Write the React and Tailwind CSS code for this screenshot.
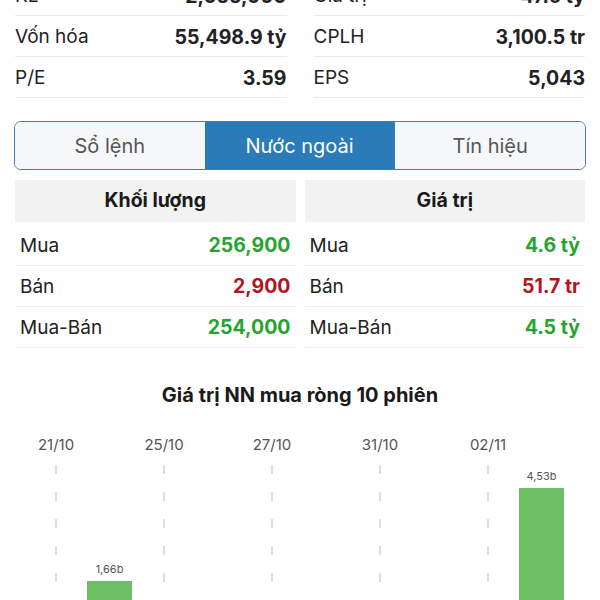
import React from 'react';

const FONT = { fontFamily: 'Inter, "Noto Sans", "Liberation Sans", sans-serif' };

const stats = [
  [['KL', '2,055,000'], ['Giá trị', '47.6 tỷ']],
  [['Vốn hóa', '55,498.9 tỷ'], ['CPLH', '3,100.5 tr']],
  [['P/E', '3.59'], ['EPS', '5,043']],
];

const volume = [
  ['Mua', '256,900', 'up'],
  ['Bán', '2,900', 'down'],
  ['Mua-Bán', '254,000', 'up'],
];

const value = [
  ['Mua', '4.6 tỷ', 'up'],
  ['Bán', '51.7 tr', 'down'],
  ['Mua-Bán', '4.5 tỷ', 'up'],
];

// 10 sessions, only 2 have positive net buy visible
const sessions = [
  { date: '21/10', v: 0 },
  { date: '', v: 1.66, label: '1,66b' },
  { date: '25/10', v: 0 },
  { date: '', v: 0 },
  { date: '27/10', v: 0 },
  { date: '', v: 0 },
  { date: '31/10', v: 0 },
  { date: '', v: 0 },
  { date: '02/11', v: 0 },
  { date: '', v: 4.53, label: '4,53b' },
];

function StatCol({ items }) {
  return (
    <div>
      {items.map(([k, v], i) => (
        <div key={i} className="flex h-[41px] items-center justify-between border-b border-[#ececec] pt-[3px] text-[19px]">
          <span className="text-[#222]">{k}</span>
          <span className="text-[19.5px] font-bold text-[#222]">{v}</span>
        </div>
      ))}
    </div>
  );
}

function FlowTable({ title, rows }) {
  return (
    <div>
      <div className="mb-[3px] flex h-[42px] items-center justify-center bg-[#f2f2f2] text-[19.5px] font-bold text-[#1a1a1a]">
        {title}
      </div>
      {rows.map(([k, v, dir], i) => (
        <div key={i} className="flex h-[41px] items-center justify-between border-b border-[#ededed] px-[5px] pt-[2px] text-[19px]">
          <span className="text-[#222]">{k}</span>
          <span className={`text-[19.5px] font-bold ${dir === 'up' ? 'text-[#25a52e]' : 'text-[#b3141f]'}`}>{v}</span>
        </div>
      ))}
    </div>
  );
}

function DashLine() {
  return (
    <svg width="2" height="180" className="mx-auto block">
      <line x1="1" y1="0" x2="1" y2="180" stroke="#bdbdbd" strokeWidth="1" strokeDasharray="9 18" />
    </svg>
  );
}

export default function App() {
  const tabs = ['Sổ lệnh', 'Nước ngoài', 'Tín hiệu'];
  const scale = 147 / 4.53;

  return (
    <div className="h-[600px] w-[600px] overflow-hidden bg-white" style={FONT}>
      <div className="mt-[-25px] grid grid-cols-2 gap-[27px] px-[15px]">
        <StatCol items={stats.map((r) => r[0])} />
        <StatCol items={stats.map((r) => r[1])} />
      </div>

      <div className="mx-[14px] mt-[23px] flex h-[49px] overflow-hidden rounded-[7px] border border-[#3d7fb5]">
        {tabs.map((t, i) => (
          <div
            key={t}
            className={`flex flex-1 items-center justify-center text-[20px] ${
              i === 1 ? 'bg-[#2b7bb9] text-white' : 'bg-[#f5f7f8] text-[#555]'
            } ${i === 2 ? 'border-l border-[#3d7fb5]' : ''}`}
          >
            {t}
          </div>
        ))}
      </div>

      <div className="mt-[10px] grid grid-cols-2 gap-[9px] px-[15px]">
        <FlowTable title="Khối lượng" rows={volume} />
        <FlowTable title="Giá trị" rows={value} />
      </div>

      <div className="mt-[35px] text-center text-[20px] font-bold leading-[24px] text-[#1a1a1a]">
        Giá trị NN mua ròng 10 phiên
      </div>

      <div className="ml-[29px] mt-[28px] grid w-[540px] grid-cols-10">
        {sessions.map((s, i) => (
          <div key={i} className="flex h-[200px] flex-col items-center">
            <div className="h-[20px] text-[15px] leading-[20px] text-[#555]">{s.date}</div>
            <div className="relative mt-[10px] w-full flex-1">
              {s.date && <DashLine />}
              {s.v > 0 && (
                <div className="absolute bottom-0 left-[4px] right-[5px] flex flex-col items-center">
                  <span className="mb-[5px] text-[11px] leading-[14px] text-[#555]">{s.label}</span>
                  <div className="w-full bg-[#6cc063]" style={{ height: s.v * scale }} />
                </div>
              )}
            </div>
          </div>
        ))}
      </div>
    </div>
  );
}
